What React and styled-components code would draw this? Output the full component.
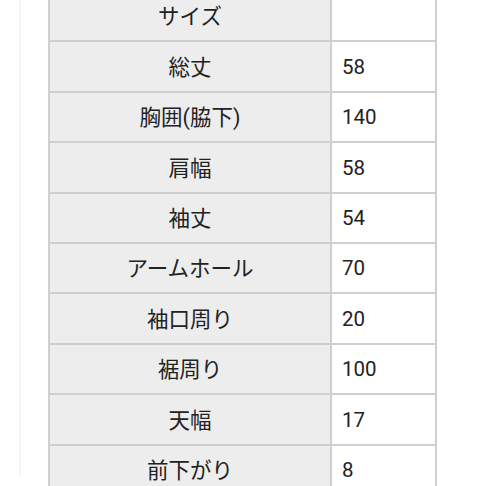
import React from "react";
import styled, { createGlobalStyle } from "styled-components";

const GlobalStyle = createGlobalStyle`
  html, body {
    margin: 0;
    padding: 0;
    background: #ffffff;
  }
  body {
    font-family: Roboto, "Noto Sans CJK JP", sans-serif;
    color: #222;
    overflow: hidden;
  }
`;

const Page = styled.div`
  width: 486px;
  height: 486px;
  overflow: hidden;
  background: #fff;
`;

const Frame = styled.div`
  margin-left: 19px;
  width: 443px;
  height: 486px;
  border-left: 2px solid #f3f3f3;
  border-right: 2px solid #f3f3f3;
  padding-left: 27px;
  box-sizing: content-box;
`;

const Table = styled.table`
  border-collapse: collapse;
  width: 389px;
  margin-top: -10px;
  table-layout: fixed;
`;

const Label = styled.td`
  width: 280px;
  height: 46.4px;
  padding: 2px 0 0;
  border: 2px solid #cfcfcf;
  background: #ededed;
  text-align: center;
  font-size: 21.5px;
  line-height: 1;
  color: #222;
`;

const Value = styled.td`
  height: 47.4px;
  padding: 1px 0 0 10px;
  border: 2px solid #cfcfcf;
  background: #fff;
  text-align: left;
  font-size: 20.5px;
  line-height: 1;
  color: #222;
`;

const rows = [
  ["サイズ", ""],
  ["総丈", "58"],
  ["胸囲(脇下)", "140"],
  ["肩幅", "58"],
  ["袖丈", "54"],
  ["アームホール", "70"],
  ["袖口周り", "20"],
  ["裾周り", "100"],
  ["天幅", "17"],
  ["前下がり", "8"],
];

export default function App() {
  return (
    <Page>
      <GlobalStyle />
      <Frame>
        <Table>
          <tbody>
            {rows.map(([label, value]) => (
              <tr key={label}>
                <Label>{label}</Label>
                <Value>{value}</Value>
              </tr>
            ))}
          </tbody>
        </Table>
      </Frame>
    </Page>
  );
}
